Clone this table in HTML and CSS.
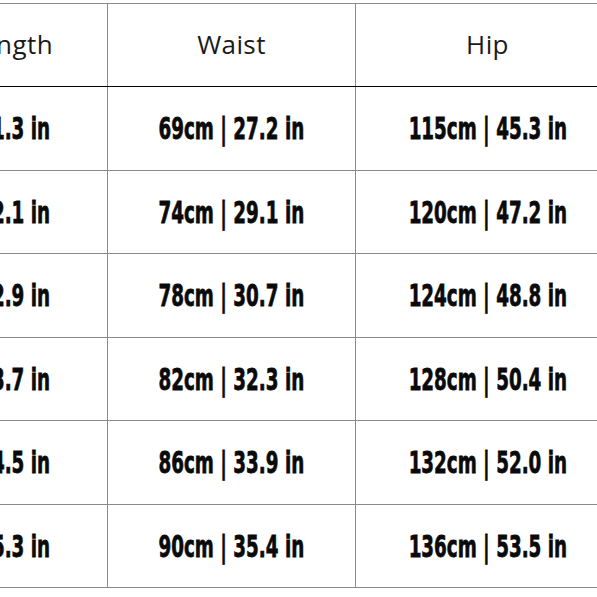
FILE: index.html
```html
<!DOCTYPE html>
<html>
<head>
<meta charset="utf-8">
<link rel="stylesheet" href="styles.css">
</head>
<body>
<div class="sheet">
  <div class="row head">
    <div class="cell c1"><span class="h">Length</span></div>
    <div class="cell"><span class="h">Waist</span></div>
    <div class="cell"><span class="h">Hip</span></div>
  </div>
  <div class="row">
    <div class="cell c1"><span class="v">105cm | 41.3 in</span></div>
    <div class="cell"><span class="v">69cm | 27.2 in</span></div>
    <div class="cell"><span class="v">115cm | 45.3 in</span></div>
  </div>
  <div class="row">
    <div class="cell c1"><span class="v">107cm | 42.1 in</span></div>
    <div class="cell"><span class="v">74cm | 29.1 in</span></div>
    <div class="cell"><span class="v">120cm | 47.2 in</span></div>
  </div>
  <div class="row">
    <div class="cell c1"><span class="v">109cm | 42.9 in</span></div>
    <div class="cell"><span class="v">78cm | 30.7 in</span></div>
    <div class="cell"><span class="v">124cm | 48.8 in</span></div>
  </div>
  <div class="row">
    <div class="cell c1"><span class="v">111cm | 43.7 in</span></div>
    <div class="cell"><span class="v">82cm | 32.3 in</span></div>
    <div class="cell"><span class="v">128cm | 50.4 in</span></div>
  </div>
  <div class="row">
    <div class="cell c1"><span class="v">113cm | 44.5 in</span></div>
    <div class="cell"><span class="v">86cm | 33.9 in</span></div>
    <div class="cell"><span class="v">132cm | 52.0 in</span></div>
  </div>
  <div class="row">
    <div class="cell c1"><span class="v">115cm | 45.3 in</span></div>
    <div class="cell"><span class="v">90cm | 35.4 in</span></div>
    <div class="cell"><span class="v">136cm | 53.5 in</span></div>
  </div>
</div>
</body>
</html>
```
FILE: styles.css
```css
html, body {
  margin: 0;
  padding: 0;
  background: #fff;
  overflow: hidden;
}
body {
  width: 597px;
  height: 597px;
}
.sheet {
  margin-top: 3px;
  margin-left: -141px;
  width: 760px;
  border-top: 1px solid #8a8a8a;
}
.row {
  display: grid;
  grid-template-columns: 248px 248px 264px;
  height: 83px;
  border-bottom: 1px solid #8a8a8a;
}
.row:nth-child(odd) {
  height: 82px;
}
.row.head {
  border-bottom-color: #000;
}
.cell {
  display: flex;
  align-items: center;
  justify-content: center;
  border-left: 1px solid #8a8a8a;
  overflow: hidden;
  white-space: nowrap;
}
.cell.c1 {
  border-left: none;
  justify-content: flex-end;
  padding-right: 52px;
}
.head .cell.c1 {
  padding-right: 54px;
}
.h {
  font-family: "Open Sans", "Noto Sans", sans-serif;
  font-size: 26px;
  letter-spacing: 0.4px;
  color: #1a1a1a;
  margin-top: -2px;
}
.v {
  display: inline-block;
  font-family: "DejaVu Sans", sans-serif;
  font-weight: bold;
  font-size: 30px;
  color: #0a0a0a;
  -webkit-text-stroke: 0.8px #0a0a0a;
  transform: scaleX(0.61);
  margin: 0 -46px;
}
```
